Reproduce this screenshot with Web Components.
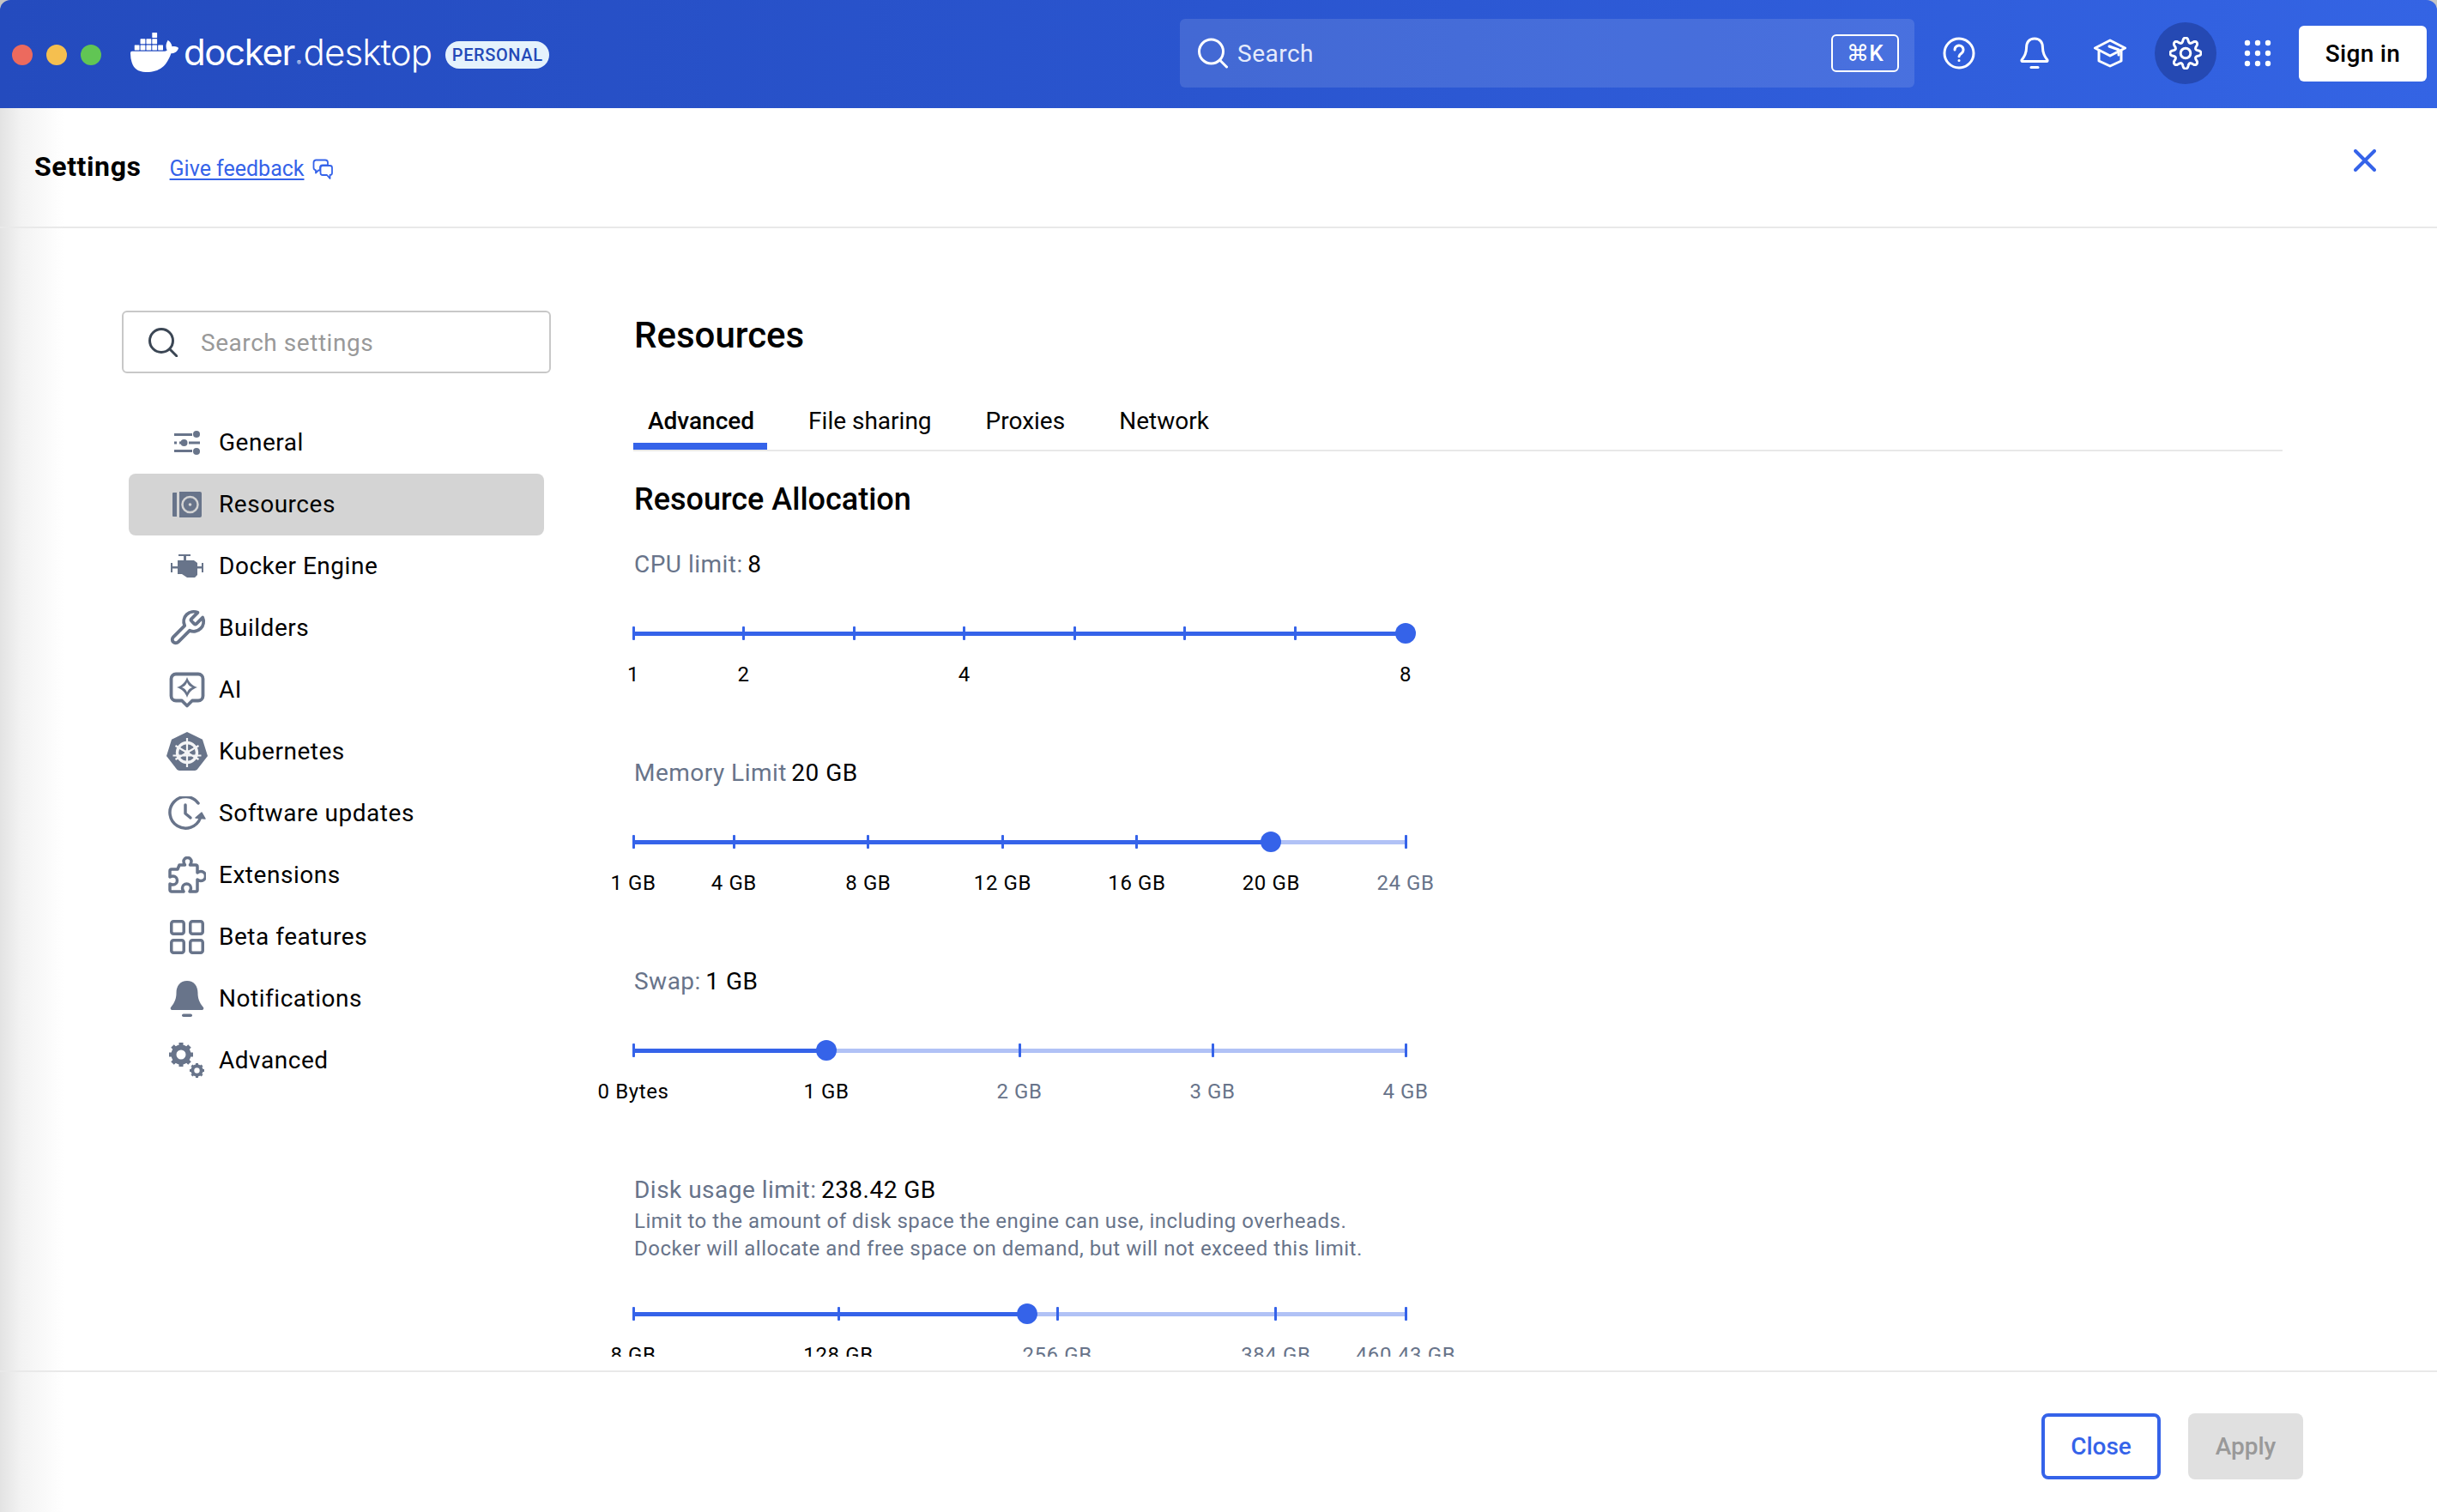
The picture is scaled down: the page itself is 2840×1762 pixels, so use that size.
<!doctype html>
<html lang="en"><head><meta charset="utf-8"><title>Docker Desktop</title>
<style>
html,body{margin:0;padding:0;height:100%;background:#fff}
body{font-family:Roboto,"Liberation Sans",sans-serif;font-size:28px;color:#000}
</style></head>
<body>
<dd-app></dd-app>
<script>
const ICONS={
general:`<svg width="32" height="28" viewBox="0 0 32 28"><g fill="#68748a"><rect x="1" y="3" width="21" height="3"/><circle cx="27" cy="4" r="4"/><rect x="1" y="12.5" width="3" height="3"/><rect x="7" y="12.5" width="2" height="3"/><circle cx="12.5" cy="14" r="4"/><rect x="18" y="12.5" width="13" height="3"/><rect x="1" y="22" width="21" height="3"/><circle cx="27" cy="24" r="4"/></g></svg>`,
resources:`<svg width="34" height="30" viewBox="0 0 34 30"><g fill="#68748a"><path d="M1 1h4v28H1a1 1 0 0 1-1-1V2a1 1 0 0 1 1-1z"/><path d="M8 0h24a2 2 0 0 1 2 2v26a2 2 0 0 1-2 2H8z" fill-rule="evenodd"/></g><circle cx="20.500" cy="15" r="9" fill="none" stroke="#d4d4d4" stroke-width="2.500"/><circle cx="20.500" cy="15" r="1.800" fill="#d4d4d4"/></svg>`,
engine:`<svg width="38" height="28" viewBox="0 0 38 28"><g fill="#68748a"><rect x="9" y="0" width="14" height="2"/><rect x="15" y="1" width="3" height="6"/><path d="M8 7h19l4 3v14l-3 3H19l-6-4H8z"/><rect x="0" y="10" width="2" height="11"/><rect x="1" y="14" width="7" height="2.500"/><rect x="31" y="14" width="5" height="2.500"/><rect x="36" y="10" width="2" height="11"/></g></svg>`,
builders:`<svg width="46" height="46" viewBox="0 0 24 24" fill="none" stroke="#68748a" stroke-width="2" stroke-linecap="round" stroke-linejoin="round"><path d="M14.700 6.300a1 1 0 0 0 0 1.400l1.600 1.600a1 1 0 0 0 1.400 0l3.770-3.770a6 6 0 0 1-7.940 7.940l-6.910 6.910a2.120 2.120 0 0 1-3-3l6.910-6.910a6 6 0 0 1 7.940-7.940l-3.760 3.760z"/></svg>`,
ai:`<svg width="42" height="42" viewBox="0 0 42 42" fill="none"><path d="M8 2.500h26a5.500 5.500 0 0 1 5.500 5.500v20a5.500 5.500 0 0 1-5.500 5.500h-7L21 39.500 15 33.500H8A5.500 5.500 0 0 1 2.500 28V8A5.500 5.500 0 0 1 8 2.500z" stroke="#68748a" stroke-width="3.800" stroke-linejoin="round"/><path d="M21 6c2 6 6 10 12 12-6 2-10 6-12 12-2-6-6-10-12-12 6-2 10-6 12-12z" fill="#68748a"/><path d="M21 12c1 3 3 5 6 6-3 1-5 3-6 6-1-3-3-5-6-6 3-1 5-3 6-6z" fill="#fff"/></svg>`,
k8s:`<svg width="48" height="46" viewBox="0 0 48 46"><path d="M24 0l18 8.700L48 28 36 43.500a4 4 0 0 1-3 1.500H15a4 4 0 0 1-3-1.500L0 28 6 8.700z" fill="#68748a"/><g fill="none" stroke="#f3f4f6"><circle cx="24" cy="24" r="11.500" stroke-width="3.400"/><circle cx="24" cy="24" r="2" stroke-width="2"/><path d="M24 7v34M10.500 16L37.500 32M37.500 16L10.500 32M7.500 27.500L40.500 27.500" stroke-width="2.200"/></g></svg>`,
updates:`<svg width="44" height="40" viewBox="0 0 44 40" fill="none" stroke="#68748a" stroke-width="3.500" stroke-linecap="round" stroke-linejoin="round"><path d="M35 8A18.300 18.300 0 1 0 37.500 25"/><path d="M20 10v10l6 5"/><path d="M32 25l7-6 4 7z" fill="#68748a" stroke-width="1.500"/></svg>`,
ext:`<svg width="44" height="44" viewBox="0 0 44 44" fill="none" stroke="#68748a" stroke-width="3.500" stroke-linejoin="round"><path d="M13 9h6.500c-1-1.500-1.500-3-1.500-4a4.500 4.500 0 0 1 9 0c0 1-.5 2.500-1.500 4H32a2 2 0 0 1 2 2v7c1.500-1 3-1.500 4-1.500a5.500 5.500 0 0 1 0 11c-1 0-2.500-.5-4-1.500v12a2 2 0 0 1-2 2h-7c1-1.500 1.500-3 1.500-4a5 5 0 0 0-10 0c0 1 .5 2.500 1.500 4H4a2 2 0 0 1-2-2v-7c1.500 .8 2.500 1 3.500 1a5 5 0 0 0 0-10c-1 0-2 .2-3.500 1v-7a2 2 0 0 1 2-2h7z" transform="translate(0 1)"/></svg>`,
beta:`<svg width="40" height="40" viewBox="0 0 40 40" fill="none" stroke="#68748a" stroke-width="3.500"><rect x="1.750" y="1.750" width="14.500" height="14.500" rx="2.500"/><rect x="23.750" y="1.750" width="14.500" height="14.500" rx="2.500"/><rect x="1.750" y="23.750" width="14.500" height="14.500" rx="2.500"/><rect x="23.750" y="23.750" width="14.500" height="14.500" rx="2.500"/></svg>`,
bell:`<svg width="40" height="42" viewBox="0 0 40 42"><g fill="#68748a"><path d="M20 0c8 0 12.500 6 12.500 14 0 6 1.500 11 6.500 17a2 2 0 0 1-1.500 3H2.500A2 2 0 0 1 1 31c5-6 6.500-11 6.500-17C7.500 6 12 0 20 0z"/><rect x="14" y="38.500" width="12" height="3.500" rx="1.750"/></g></svg>`,
adv:`<svg width="42" height="42" viewBox="0 0 42 42"><g fill="none" stroke="#68748a"><circle cx="14" cy="14" r="8.500" stroke-width="6"/><path d="M14 0v6M14 22v6M0 14h6M22 14h6M4 4l4.500 4.500M19.500 19.500l4.500 4.500M24 4l-4.500 4.500M8.500 19.500L4 24" stroke-width="5"/><circle cx="32.500" cy="32.500" r="5.200" stroke-width="4"/><path d="M32.500 24v3.500M32.500 37.500v3.500M24 32.500h3.500M37.500 32.500H41M26.500 26.500l2 2M36.500 36.500l2 2M38.500 26.500l-2 2M28.500 36.500l-2 2" stroke-width="3"/></g></svg>`
};
function gearPath(){
  let p='';
  for(let i=0;i<=160;i++){
    const t=i/160*Math.PI*2-Math.PI/2;
    const w=Math.cos(8*(t+Math.PI/2));
    const r=14.6+2.6*Math.sign(w)*Math.pow(Math.abs(w),.7);
    p+=(i?'L':'M')+(18+r*Math.cos(t)).toFixed(2)+' '+(18+r*Math.sin(t)).toFixed(2);
  }
  return p+'Z';
}
const mk=(name,cls)=>customElements.define(name,cls);
class Base extends HTMLElement{
  constructor(){super();this.attachShadow({mode:'open'});}
  html(s){this.shadowRoot.innerHTML=s;}
}
mk('dd-traffic',class extends Base{connectedCallback(){this.html(`<style>
:host{display:flex;gap:16px;align-items:center}
i{width:24px;height:24px;border-radius:50%;display:block}
</style><i style="background:#ec6a5e"></i><i style="background:#f5bf4f"></i><i style="background:#61c554"></i>`);}});
mk('dd-logo',class extends Base{connectedCallback(){this.html(`<style>
:host{display:flex;align-items:center;color:#fff;font-family:Inter,Lato,sans-serif}
svg{display:block;margin-right:6px;margin-bottom:3px}
.t{font-size:42px;line-height:60px;display:flex;align-items:baseline;margin-bottom:3px;white-space:nowrap}
.a{font-weight:400;letter-spacing:-1.400px}.b{font-weight:300;letter-spacing:-.9px}
.r{font-size:7px;line-height:0;margin:0 3px 0 3px}
.pill{margin-left:16px;width:121px;box-sizing:border-box;text-align:center;background:#e5f2fc;color:#2449b8;font:500 20px/32px Roboto,sans-serif;letter-spacing:.6px;border-radius:16px;margin-top:4px}
</style><svg width="56" height="46" viewBox="0 3.39 24 17.2" preserveAspectRatio="none" fill="#fff"><path d="M13.983 11.078h2.119a.186.186 0 00.186-.185V9.006a.186.186 0 00-.186-.186h-2.119a.185.185 0 00-.185.185v1.888c0 .102.083.185.185.185m-2.954-5.43h2.118a.186.186 0 00.186-.186V3.574a.186.186 0 00-.186-.185h-2.118a.185.185 0 00-.185.185v1.888c0 .102.082.185.185.186m0 2.716h2.118a.187.187 0 00.186-.186V6.29a.186.186 0 00-.186-.185h-2.118a.185.185 0 00-.185.185v1.887c0 .102.082.185.185.186m-2.93 0h2.12a.186.186 0 00.184-.186V6.29a.185.185 0 00-.185-.185H8.1a.185.185 0 00-.185.185v1.887c0 .102.083.185.185.186m-2.964 0h2.119a.186.186 0 00.185-.186V6.29a.185.185 0 00-.185-.185H5.136a.186.186 0 00-.186.185v1.887c0 .102.084.185.186.186m5.893 2.715h2.118a.186.186 0 00.186-.185V9.006a.186.186 0 00-.186-.186h-2.118a.185.185 0 00-.185.185v1.888c0 .102.082.185.185.185m-2.93 0h2.12a.185.185 0 00.184-.185V9.006a.185.185 0 00-.184-.186h-2.12a.185.185 0 00-.184.185v1.888c0 .102.083.185.185.185m-2.964 0h2.119a.185.185 0 00.185-.185V9.006a.185.185 0 00-.184-.186h-2.12a.186.186 0 00-.186.186v1.887c0 .102.084.185.186.185m-2.92 0h2.12a.185.185 0 00.184-.185V9.006a.185.185 0 00-.184-.186h-2.12a.185.185 0 00-.184.185v1.888c0 .102.082.185.185.185M23.763 9.89c-.065-.051-.672-.51-1.954-.51-.338.001-.676.03-1.01.087-.248-1.7-1.653-2.53-1.716-2.566l-.344-.199-.226.327c-.284.438-.49.922-.612 1.43-.23.97-.09 1.882.403 2.661-.595.332-1.55.413-1.744.42H.751a.751.751 0 00-.75.748 11.376 11.376 0 00.692 4.062c.545 1.428 1.355 2.48 2.41 3.124 1.18.723 3.1 1.137 5.275 1.137.983.003 1.963-.086 2.93-.266a12.248 12.248 0 003.823-1.389c.98-.567 1.86-1.288 2.61-2.136 1.252-1.418 1.998-2.997 2.553-4.4h.221c1.372 0 2.215-.549 2.68-1.009.309-.293.55-.65.707-1.046l.098-.288Z"/></svg>
<span class="t"><span class="a">docker</span><span class="r">®</span><span class="b">desktop</span></span><span class="pill">PERSONAL</span>`);}});
mk('dd-global-search',class extends Base{connectedCallback(){this.html(`<style>
:host{display:flex;align-items:center;width:856px;height:80px;box-sizing:border-box;background:rgba(255,255,255,.12);border-radius:6px;padding:0 18px 0 20px;color:#e6ebfb;font-size:28px;letter-spacing:.5px}
svg{display:block;margin-right:11px}
span{flex:1}
kbd{font:500 26px/40px Roboto,sans-serif;color:#fff;border:2px solid #fff;border-radius:6px;width:79px;height:44px;box-sizing:border-box;text-align:center;display:block}
</style><svg width="36" height="36" viewBox="0 0 36 36" fill="none" stroke="#fff" stroke-width="3"><circle cx="16.500" cy="16" r="14"/><path d="M26.500 26l8 8" stroke-linecap="round"/></svg><span>Search</span><kbd>⌘K</kbd>`);}});
mk('dd-head-icon',class extends Base{connectedCallback(){
 const a=this.hasAttribute('active');
 this.html(`<style>
:host{display:flex;align-items:center;justify-content:center;width:72px;height:72px;border-radius:50%;${a?'background:#2549b3':''}}
</style><slot></slot>`);}});
mk('dd-titlebar',class extends Base{connectedCallback(){this.html(`<style>
:host{display:flex;align-items:center;height:126px;box-sizing:border-box;padding:0 12px 2px 14px;background:linear-gradient(90deg,#244bbe 0%,#2a55cf 50%,#3464e4 100%);flex:none;border-radius:12px 12px 0 0}
dd-traffic{margin-top:4px}
dd-logo{margin-left:34px}
.sp{flex:1}
dd-global-search{margin-right:16px}
.sign{font:500 28px/65px Roboto,sans-serif;width:149px;height:65px;background:#fff;color:#000;border-radius:6px;text-align:center;margin-left:12px;letter-spacing:.3px}
.ic{display:flex;gap:16px;align-items:center}
.ic svg{display:block}
.last{margin-left:-4px}
</style><dd-traffic></dd-traffic><dd-logo></dd-logo><div class="sp"></div><dd-global-search></dd-global-search>
<div class="ic">
<dd-head-icon><svg width="38" height="38" viewBox="0 0 38 38" fill="none" stroke="#fff" stroke-width="3" stroke-linecap="round"><circle cx="19" cy="19" r="17"/><path d="M14 15a5 5 0 1 1 8 4c-2 1.400-3 2.200-3 3.800"/><circle cx="19" cy="27.500" r=".8" fill="#fff" stroke-width="1.500"/></svg></dd-head-icon>
<dd-head-icon><svg width="34" height="38" viewBox="0 0 34 38" fill="none" stroke="#fff" stroke-width="3" stroke-linejoin="round" stroke-linecap="round"><path d="M17 2c6.500 0 9.500 4.500 9.500 11 0 6 1.500 9 5.500 14a1 1 0 0 1-.8 1.500H2.800A1 1 0 0 1 2 27c4-5 5.500-8 5.500-14C7.500 6.500 10.500 2 17 2z"/><path d="M13 35.500h8"/></svg></dd-head-icon>
<dd-head-icon><svg width="38" height="34" viewBox="0 0 38 34" fill="none" stroke="#fff" stroke-width="3" stroke-linejoin="round" stroke-linecap="round"><path d="M19 2L36.500 11 19 20 1.500 11z"/><path d="M6 14v12l13 6 13-6V14"/><path d="M18 9l11 4v6"/></svg></dd-head-icon>
<dd-head-icon active><svg width="38" height="38" viewBox="0 0 36 36" fill="none" stroke="#fff" stroke-width="2.800" stroke-linejoin="round"><path d="${gearPath()}"/><circle cx="18" cy="18" r="5.500"/></svg></dd-head-icon>
<dd-head-icon class="last"><svg width="32" height="32" viewBox="0 0 32 32" fill="#fff"><circle cx="4" cy="4" r="3.200"/><circle cx="16" cy="4" r="3.200"/><circle cx="28" cy="4" r="3.200"/><circle cx="4" cy="16" r="3.200"/><circle cx="16" cy="16" r="3.200"/><circle cx="28" cy="16" r="3.200"/><circle cx="4" cy="28" r="3.200"/><circle cx="16" cy="28" r="3.200"/><circle cx="28" cy="28" r="3.200"/></svg></dd-head-icon>
</div>
<div class="sign">Sign in</div>`);}});
mk('dd-settings-bar',class extends Base{connectedCallback(){this.html(`<style>
:host{display:flex;align-items:center;height:140px;box-sizing:border-box;border-bottom:2px solid #e9e9e9;padding:0 71px 0 40px;flex:none}
h2{font:700 32px/40px Roboto,sans-serif;margin:0 33px 0 0;letter-spacing:.6px;padding-bottom:2px}
a{color:#3563e9;font-size:25px;text-decoration:underline;text-underline-offset:3px;padding-top:2px}
svg{display:block;margin-left:9px;margin-top:4px}
.sp{flex:1}
.x{margin-top:-16px}
</style><h2>Settings</h2><a>Give feedback</a><svg width="24" height="24" viewBox="0 0 24 24" fill="none" stroke="#3563e9" stroke-width="1.800" stroke-linejoin="round"><path d="M4 1.500h11a3 3 0 0 1 3 3v3H12a3 3 0 0 0-3 3v3H7l-3 3v-3.200A3 3 0 0 1 1.500 10.500v-6a3 3 0 0 1 2.500-3z"/><path d="M12 8h8.500a2.500 2.500 0 0 1 2.500 2.500v6a2.500 2.500 0 0 1-2.500 2.500V23l-3.500-4h-5a2.500 2.500 0 0 1-2.500-2.500v-6A2.500 2.500 0 0 1 12 8z"/></svg><div class="sp"></div><svg class="x" width="26" height="26" viewBox="0 0 26 26" stroke="#3563e9" stroke-width="4" stroke-linecap="round"><path d="M2 2l22 22M24 2L2 24"/></svg>`);}});
mk('dd-nav-item',class extends Base{connectedCallback(){
 const a=this.hasAttribute('active');
 this.html(`<style>
:host{display:flex;align-items:center;height:72px;border-radius:8px;color:#000;letter-spacing:.53px;${a?'background:#d4d4d4;':''}}
.i{width:136px;height:72px;display:flex;align-items:center;justify-content:center;margin-right:-31px;flex:none}
.i svg{display:block}
.t{margin-top:-2px}
</style><div class="i">${ICONS[this.getAttribute('icon')]}</div><span class="t"><slot></slot></span>`);}});
mk('dd-side',class extends Base{connectedCallback(){this.html(`<style>
:host{display:block;width:500px;flex:none;margin-left:142px;padding-top:96px}
.s{display:flex;align-items:center;height:73px;box-sizing:border-box;border:2px solid #c8c8c8;border-radius:6px;padding-left:29px;background:#fff;color:#999;letter-spacing:.55px;margin-bottom:45px}
.s svg{margin-right:27px;display:block}
.s span{padding-top:2px}
nav{margin:0 8px;display:block}
</style><div class="s"><svg width="34" height="34" viewBox="0 0 34 34" fill="none" stroke="#3b4654" stroke-width="3"><circle cx="15" cy="15" r="13.500"/><path d="M25 25l8 8" stroke-linecap="round"/></svg><span>Search settings</span></div>
<nav><slot></slot></nav>`);}});
mk('dd-tabs',class extends Base{connectedCallback(){this.html(`<style>
:host{display:flex;gap:31px;border-bottom:2px solid #e8e8e8;margin-top:38px}
</style><slot></slot>`);}});
mk('dd-tab',class extends Base{connectedCallback(){const a=this.hasAttribute('active');this.html(`<style>
:host{display:block;padding:20px 15px 7px 17px;font:${a?500:400} 28px/36px Roboto,sans-serif;border-bottom:8px solid ${a?'#3563e9':'transparent'}}
</style><slot></slot>`);}});
mk('dd-slider',class extends Base{connectedCallback(){
 const marks=JSON.parse(this.getAttribute('marks'));
 const val=+this.getAttribute('value');
 const desc=this.hasAttribute('desc');
 const ticks=marks.map(m=>`<b class="tick" style="left:${m[0]}%"></b>`).join('');
 const labs=marks.filter(m=>m[1]).map(m=>`<span style="left:${m[0]}%" class="${m[0]>val?'off':''}">${m[1]}</span>`).join('');
 this.html(`<style>
:host{display:block;width:900px;margin-bottom:81px;letter-spacing:.6px}
.l{font-size:28px;line-height:36px;color:#68748a;white-space:nowrap;letter-spacing:.48px;padding-left:1px}
.d{font-size:24px;line-height:32px;color:#68748a;margin-top:2px;white-space:nowrap;letter-spacing:.5px;padding-left:1px}
.track{position:relative;height:24px;margin-top:${desc?48:50}px}
.bg{position:absolute;left:0;right:0;top:9.500px;height:5px;background:#b1c2f6}
.fill{position:absolute;left:0;top:9.500px;height:5px;background:#3563e9;width:${val}%}
.tick{position:absolute;top:4px;width:3px;height:16px;margin-left:-1.500px;background:#3563e9;border-radius:1px}
.th{position:absolute;top:0;left:${val}%;width:24px;height:24px;margin-left:-12px;border-radius:50%;background:#3563e9}
.labels{position:relative;height:32px;margin-top:20px;font-size:24px;line-height:32px}
.labels span{position:absolute;top:0;transform:translateX(-50%);white-space:nowrap}
.off{color:#68748a}
</style><div class="l"><slot></slot></div>${desc?`<div class="d"><slot name="desc"></slot></div>`:''}
<div class="track"><div class="bg"></div><div class="fill"></div>${ticks}<div class="th"></div></div>
<div class="labels">${labs}</div>`);}});
mk('dd-main',class extends Base{connectedCallback(){this.html(`<style>
:host{display:block;flex:1;min-width:0;overflow:hidden;padding:101px 180px 0 96px;box-sizing:border-box}
h1{font:500 42px/48px Roboto,sans-serif;margin:0;padding-left:1px}
h3{font:500 36px/44px Roboto,sans-serif;margin:34px 0 36px;padding-left:1px}
</style><h1>Resources</h1>
<dd-tabs><dd-tab active>Advanced</dd-tab><dd-tab>File sharing</dd-tab><dd-tab>Proxies</dd-tab><dd-tab>Network</dd-tab></dd-tabs>
<h3>Resource Allocation</h3><slot></slot>`);}});
mk('dd-footer',class extends Base{connectedCallback(){this.html(`<style>
:host{display:flex;justify-content:flex-end;gap:32px;height:165px;box-sizing:border-box;border-top:2px solid #e9e9e9;padding:48px 156px 0 0;flex:none}
div{height:77px;box-sizing:border-box;border-radius:8px;font:500 28px/77px Roboto,sans-serif;text-align:center}
.c{width:139px;border:4px solid #3563e9;color:#3563e9;line-height:69px}
.a{width:134px;background:#e0e0e0;color:#999}
</style><div class="c">Close</div><div class="a">Apply</div>`);}});
mk('dd-app',class extends Base{connectedCallback(){this.html(`<style>
:host{display:flex;flex-direction:column;height:1762px;overflow:hidden;background:#c4c4c4}
.w{flex:1;display:flex;flex-direction:column;min-height:0;background:linear-gradient(90deg,#e3e3e3 0,#f3f3f3 25px,#fff 75px)}
.b{flex:1;display:flex;min-height:0;padding-bottom:16px}
dd-slider b{font-weight:400;color:#000;margin-left:-2px}
</style><dd-titlebar></dd-titlebar><div class="w"><dd-settings-bar></dd-settings-bar><div class="b">
<dd-side>
<dd-nav-item icon="general">General</dd-nav-item>
<dd-nav-item icon="resources" active>Resources</dd-nav-item>
<dd-nav-item icon="engine">Docker Engine</dd-nav-item>
<dd-nav-item icon="builders">Builders</dd-nav-item>
<dd-nav-item icon="ai">AI</dd-nav-item>
<dd-nav-item icon="k8s">Kubernetes</dd-nav-item>
<dd-nav-item icon="updates">Software updates</dd-nav-item>
<dd-nav-item icon="ext">Extensions</dd-nav-item>
<dd-nav-item icon="beta">Beta features</dd-nav-item>
<dd-nav-item icon="bell">Notifications</dd-nav-item>
<dd-nav-item icon="adv">Advanced</dd-nav-item>
</dd-side>
<dd-main>
<dd-slider value="100" marks='[[0,"1"],[14.2857,"2"],[28.5714,""],[42.857,"4"],[57.143,""],[71.43,""],[85.71,""],[100,"8"]]'>CPU limit: <b>8</b></dd-slider>
<dd-slider value="82.6" marks='[[0,"1 GB"],[13.04,"4 GB"],[30.43,"8 GB"],[47.83,"12 GB"],[65.22,"16 GB"],[82.6,"20 GB"],[100,"24 GB"]]'>Memory Limit <b>20 GB</b></dd-slider>
<dd-slider value="25" marks='[[0,"0 Bytes"],[25,"1 GB"],[50,"2 GB"],[75,"3 GB"],[100,"4 GB"]]'>Swap: <b>1 GB</b></dd-slider>
<dd-slider value="51" desc marks='[[0,"8 GB"],[26.56,"128 GB"],[54.9,"256 GB"],[83.2,"384 GB"],[100,"460.43 GB"]]'>Disk usage limit: <b>238.42 GB</b><span slot="desc">Limit to the amount of disk space the engine can use, including overheads.<br>Docker will allocate and free space on demand, but will not exceed this limit.</span></dd-slider>
</dd-main>
</div><dd-footer></dd-footer></div>`);}});
</script>
</body></html>
